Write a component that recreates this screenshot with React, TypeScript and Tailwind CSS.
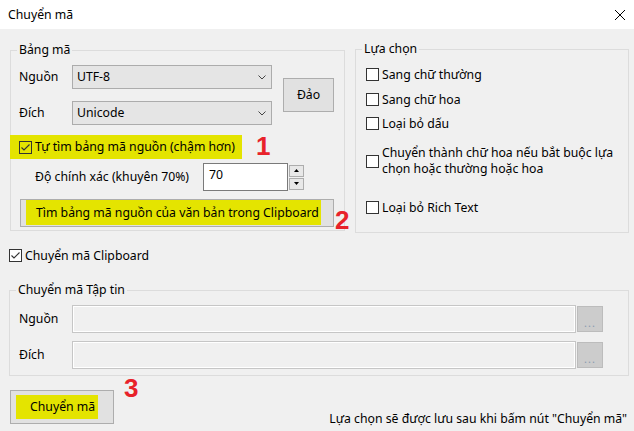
import type { ReactNode } from "react";

const YELLOW = "bg-[#e4e400]";

function Check({ checked = false, clear = false }: { checked?: boolean; clear?: boolean }) {
  return (
    <span
      className={`flex h-[13px] w-[13px] shrink-0 items-center justify-center border border-[#333333] ${
        clear ? "bg-transparent" : "bg-white"
      }`}
    >
      {checked && (
        <svg width="11" height="11" viewBox="0 0 11 11" fill="none">
          <path d="M1.5 5.5 L4 8 L9.5 2.5" stroke="#333333" strokeWidth="1.1" />
        </svg>
      )}
    </span>
  );
}

function Option({ children, className = "" }: { children: ReactNode; className?: string }) {
  return (
    <div className={`ml-[10px] flex items-center ${className}`}>
      <Check />
      <span className="ml-[3px]">{children}</span>
    </div>
  );
}

function Combo({ label, value }: { label: string; value: string }) {
  return (
    <div className="flex items-center">
      <span className="ml-[8px] w-[53px]">{label}</span>
      <div className="flex h-[24px] w-[200px] items-center justify-between border border-[#acacac] bg-[#e5e5e5] pl-[4px] pr-[5px]">
        <span>{value}</span>
        <svg width="8" height="5" viewBox="0 0 8 5" fill="none">
          <path d="M0.5 0.5 L4 4 L7.5 0.5" stroke="#444444" strokeWidth="1" />
        </svg>
      </div>
    </div>
  );
}

function FileRow({ label, className = "" }: { label: string; className?: string }) {
  return (
    <div className={`flex items-center ${className}`}>
      <span className="ml-[9px] w-[53px]">{label}</span>
      <div className="h-[28px] w-[504px] border border-[#c6c6c6] bg-[#f0f0f0] shadow-[inset_0_0_0_1px_#ffffff]" />
      <div className="ml-[1px] flex h-[26px] w-[26px] items-end justify-center border border-[#bcbcbc] bg-[#cccccc] pb-[3px] text-[11px] leading-[11px] tracking-[1px] text-[#8a9bb0]">
        ...
      </div>
    </div>
  );
}

function Legend({ children }: { children: ReactNode }) {
  return <legend className="ml-[6px] px-[2px]">{children}</legend>;
}

export default function App() {
  return (
    <div className="relative h-[431px] w-[634px] overflow-hidden bg-[#f0f0f0] font-['Noto_Sans',sans-serif] text-[12.25px] leading-[16px] text-black">
      {/* title bar */}
      <div className="flex h-[29px] items-center justify-between bg-white pl-[8px] pr-[9px]">
        <span>Chuyển mã</span>
        <svg width="10" height="10" viewBox="0 0 10 10" fill="none">
          <path d="M0 0 L10 10 M10 0 L0 10" stroke="#000000" strokeWidth="1" />
        </svg>
      </div>

      <div className="flex items-start pt-[13px]">
        <fieldset className="ml-[10px] w-[335px] border border-[#dcdcdc] pb-[3px]">
          <Legend>Bảng mã</Legend>
          <div className="flex items-center pt-[7px]">
            <div className="flex flex-col gap-[12px]">
              <Combo label="Nguồn" value="UTF-8" />
              <Combo label="Đích" value="Unicode" />
            </div>
            <div className="ml-[11px] flex h-[34px] w-[51px] items-center justify-center border border-[#adadad] bg-[#e1e1e1]">
              Đảo
            </div>
          </div>

          <div className={`ml-[-1px] mt-[10px] flex h-[24px] w-[232px] items-center pl-[9px] ${YELLOW}`}>
            <Check checked clear />
            <span className="ml-[3px]">Tự tìm bảng mã nguồn (chậm hơn)</span>
          </div>

          <div className="mt-[4px] flex h-[28px] items-center">
            <span className="ml-[24px] w-[168px]">Độ chính xác (khuyên 70%)</span>
            <div className="h-[28px] w-[85px] border border-[#7a7a7a] bg-white pl-[5px] pt-[3px]">70</div>
            <div className="ml-[1px] flex h-[28px] w-[15px] flex-col justify-center gap-[1px]">
              <div className="flex h-[12px] items-center justify-center border border-[#adadad] bg-[#e8e8e8]">
                <svg width="5" height="3" viewBox="0 0 5 3">
                  <path d="M2.5 0 L5 3 L0 3 Z" fill="#000000" />
                </svg>
              </div>
              <div className="flex h-[12px] items-center justify-center border border-[#adadad] bg-[#e8e8e8]">
                <svg width="5" height="3" viewBox="0 0 5 3">
                  <path d="M0 0 L5 0 L2.5 3 Z" fill="#000000" />
                </svg>
              </div>
            </div>
          </div>

          <div className="ml-[9px] mt-[8px] flex h-[28px] w-[314px] items-start border border-[#adadad] bg-[#e1e1e1] pl-[5px]">
            <div className={`flex h-[25px] w-[295px] items-center pl-[10px] ${YELLOW}`}>
              Tìm bảng mã nguồn của văn bản trong Clipboard
            </div>
          </div>
        </fieldset>

        <fieldset className="ml-[10px] mt-[-1px] w-[274px] border border-[#dcdcdc] pb-[16px]">
          <Legend>Lựa chọn</Legend>
          <Option className="mt-[9px] h-[17px]">Sang chữ thường</Option>
          <Option className="mt-[8px] h-[17px]">Sang chữ hoa</Option>
          <Option className="mt-[7px] h-[17px]">Loại bỏ dấu</Option>
          <Option className="mt-[13px]">
            Chuyển thành chữ hoa nếu bắt buộc lựa
            <br />
            chọn hoặc thường hoặc hoa
          </Option>
          <Option className="mt-[22px] h-[17px]">Loại bỏ Rich Text</Option>
        </fieldset>
      </div>

      <div className="ml-[9px] mt-[14px] flex h-[17px] items-center">
        <Check checked />
        <span className="ml-[3px]">Chuyển mã Clipboard</span>
      </div>

      <fieldset className="ml-[9px] mt-[18px] w-[620px] border border-[#dcdcdc] pb-[6px]">
        <Legend>Chuyển mã Tập tin</Legend>
        <FileRow label="Nguồn" className="mt-[7px]" />
        <FileRow label="Đích" className="mt-[8px]" />
      </fieldset>

      <div className="mt-[14px] flex items-start">
        <div className="ml-[10px] h-[34px] w-[104px] border border-[#adadad] bg-[#e1e1e1] pl-[5px] pt-[4px]">
          <div className={`flex h-[24px] w-[82px] items-center pl-[14px] ${YELLOW}`}>Chuyển mã</div>
        </div>
        <span className="ml-auto mr-[7px] mt-[21px]">Lựa chọn sẽ được lưu sau khi bấm nút "Chuyển mã"</span>
      </div>

      {/* annotation numbers */}
      <span className="absolute left-[256px] top-[133px] font-['Liberation_Sans',sans-serif] text-[26px] font-bold leading-[26px] text-[#e8222a]">
        1
      </span>
      <span className="absolute left-[335px] top-[207px] font-['Liberation_Sans',sans-serif] text-[26px] font-bold leading-[26px] text-[#e8222a]">
        2
      </span>
      <span className="absolute left-[124px] top-[375px] font-['Liberation_Sans',sans-serif] text-[26px] font-bold leading-[26px] text-[#e8222a]">
        3
      </span>
    </div>
  );
}
